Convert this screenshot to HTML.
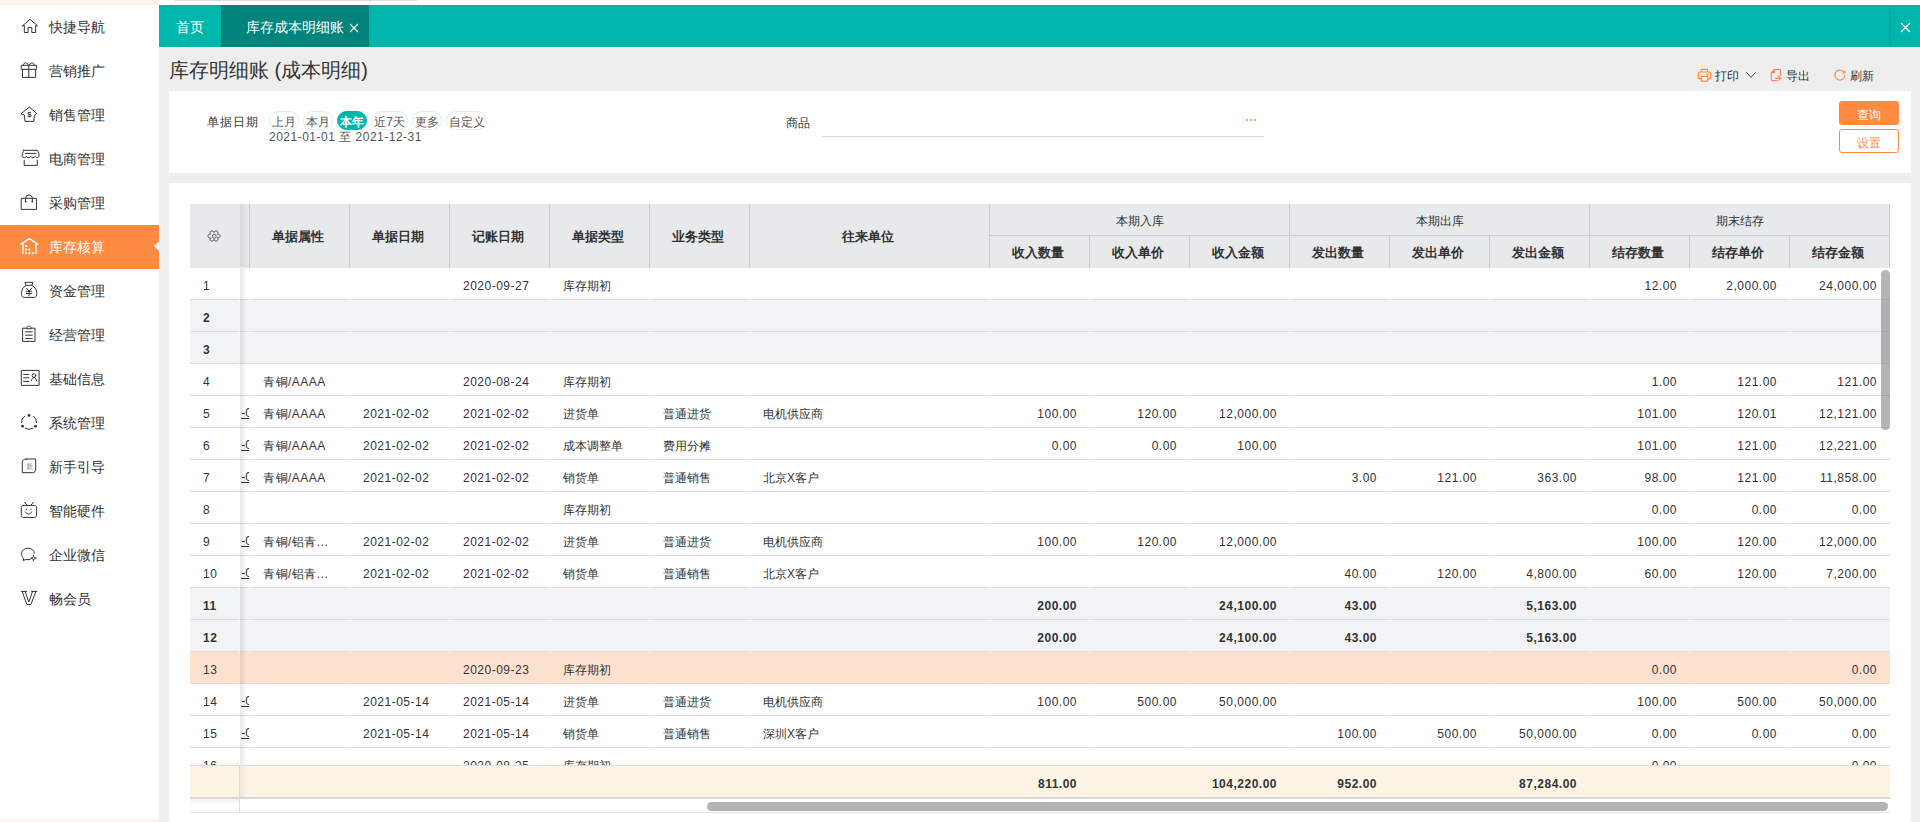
<!DOCTYPE html><html><head><meta charset="utf-8"><style>
*{margin:0;padding:0;box-sizing:border-box}
html,body{width:1920px;height:822px;overflow:hidden;background:#fff;font-family:"Liberation Sans",sans-serif;color:#333}
.abs{position:absolute}
svg{display:block}
.si{position:absolute;left:0;width:159px;height:44px;font-size:14px;color:#333}
.si span{position:absolute;left:49px;top:14px;line-height:16px}
.si svg{position:absolute;left:16px;top:7px}
.si.on{background:#ff8a42;color:#fff}
.tab{position:absolute;top:0;height:42px;font-size:14px;color:#fff}
.tab span{position:absolute;top:14px;line-height:16px}
.panel{position:absolute;background:#fff}
.pill{position:absolute;top:111px;height:19px;border:1px solid #d6f0ee;border-radius:10px;font-size:12px;color:#555;text-align:center;line-height:21px}
.pill.on{background:#00b5aa;border-color:#00b5aa;color:#fff;font-weight:bold}
.th{position:absolute;font-size:13px;font-weight:bold;color:#333;text-align:center;background:#e8e9eb;border-right:1px solid #cbcbcb;padding-right:4px}
.th.g{border-bottom:1px solid #cbcbcb}
.th.g{font-size:12px;font-weight:normal;padding-right:0}
.row{position:absolute;left:0;width:1700px;height:32px;border-bottom:1px solid #dcdcdc}
.c{position:absolute;top:4px;height:29px;line-height:28px;font-size:12px;color:#333;white-space:nowrap;overflow:hidden}
.n{letter-spacing:0.5px}
.r{text-align:right}
.b{font-weight:bold}
</style></head><body>
<div class="abs" style="left:0;top:0;width:159px;height:822px;background:#fff">
<div class="abs" style="left:0;top:0;width:159px;height:5px;background:#fff3ec"></div>
<div class="abs" style="left:0;top:819px;width:159px;height:3px;background:#fff3ec"></div>
<div class="si" style="top:5px"><svg width="28" height="28" viewBox="0 0 28 28"><path fill="none" stroke="#333" stroke-width="1" stroke-linejoin="round" stroke-linecap="round" d="M6.5 13.8 L14 7.3 L21.5 13.8 H19.6 V20.5 H15.8 V15.4 H12.1 V20.5 H8.3 V13.8 Z"/></svg><span>快捷导航</span></div>
<div class="si" style="top:49px"><svg width="28" height="28" viewBox="0 0 28 28"><path fill="none" stroke="#333" stroke-width="1" stroke-linejoin="round" stroke-linecap="round" d="M5.6 9.3 H20.4 V13.4 H5.6 Z M6.5 13.4 V21.4 H19.6 V13.4 M12.8 9.3 V21.4 M12.8 9.2 C11 6.3 7.5 5.8 7.4 9.2 M12.8 9.2 C14.6 6.3 18.2 5.8 18.2 9.2"/></svg><span>营销推广</span></div>
<div class="si" style="top:93px"><svg width="28" height="28" viewBox="0 0 28 28"><path fill="none" stroke="#333" stroke-width="1" stroke-linejoin="round" stroke-linecap="round" d="M5.4 13.5 L13.3 7 L20.8 13.5 L18.4 15.4 L17.8 21.4 H9 L8.4 15.4 Z"/><text x="13.3" y="17.3" font-size="7.5" text-anchor="middle" fill="#333" font-family="Liberation Sans" font-weight="bold">$</text></svg><span>销售管理</span></div>
<div class="si" style="top:137px"><svg width="28" height="28" viewBox="0 0 28 28"><path fill="none" stroke="#333" stroke-width="1" stroke-linejoin="round" stroke-linecap="round" d="M7.8 6.3 H21.4 C22.5 8 23.2 10.5 23 12.5 C22.6 14 20 14 19.2 12.4 C18.4 14 15.6 14 14.9 12.4 C14.2 14 11.4 14 10.5 12.4 C9.6 14 6.7 14 6.2 12.5 C6 10.5 6.7 8 7.8 6.3 Z M9.3 9.4 H19.8 M8.2 16.2 V21.4 H21.3 V16.2"/></svg><span>电商管理</span></div>
<div class="si" style="top:181px"><svg width="28" height="28" viewBox="0 0 28 28"><path fill="none" stroke="#333" stroke-width="1" stroke-linejoin="round" stroke-linecap="round" d="M5.6 10.3 H20.4 V21.4 H5.6 Z M9.6 13.5 V9.8 A3.4 3.4 0 0 1 16.3 9.8 V13.5"/><circle cx="9.6" cy="13.6" r="0.9" fill="#333"/><circle cx="16.3" cy="13.6" r="0.9" fill="#333"/></svg><span>采购管理</span></div>
<div class="si on" style="top:225px"><svg width="28" height="28" viewBox="0 0 28 28"><path fill="none" stroke="#fff" stroke-width="1.4" stroke-linejoin="round" stroke-linecap="round" d="M5 12.2 L13.4 6.6 L21.6 12.2 M7 11 V21.3 M20 11 V21.3"/><rect x="9" y="13" width="2" height="2" fill="#fff"/><rect x="9" y="16.6" width="2" height="2" fill="#fff"/><rect x="12.4" y="16.6" width="2" height="2" fill="#fff"/><rect x="9" y="20.2" width="2" height="2" fill="#fff"/><rect x="12.4" y="20.2" width="2" height="2" fill="#fff"/><rect x="15.8" y="20.2" width="2" height="2" fill="#fff"/></svg><span>库存核算</span></div>
<div class="si" style="top:269px"><svg width="28" height="28" viewBox="0 0 28 28"><path fill="none" stroke="#333" stroke-width="1" stroke-linejoin="round" stroke-linecap="round" d="M9.3 6.3 H16.9 L16 9.3 H10.2 Z M10 9.6 C7 11 5.5 14 5.5 17.6 C5.5 20.2 6.5 21.4 8.2 21.4 H18.2 C19.9 21.4 20.8 20.2 20.8 17.6 C20.8 14 19.3 11 16.3 9.6 M10.6 12.2 L13.1 15.2 L15.6 12.2 M10.3 15.3 H15.9 M10.3 17.5 H15.9 M13.1 15.2 V19.7"/></svg><span>资金管理</span></div>
<div class="si" style="top:313px"><svg width="28" height="28" viewBox="0 0 28 28"><path fill="none" stroke="#333" stroke-width="1" stroke-linejoin="round" stroke-linecap="round" d="M10.4 8.2 H6.6 V21.4 H19 V8.2 H15.4 M10.4 8.3 C10.8 6.9 11.7 6.2 12.9 6.2 C14.1 6.2 15 6.9 15.4 8.3 Z M9.6 11.8 H16.2 M9.6 15.2 H16.2 M9.6 18.6 H16.2"/></svg><span>经营管理</span></div>
<div class="si" style="top:357px"><svg width="28" height="28" viewBox="0 0 28 28"><path fill="none" stroke="#333" stroke-width="1" stroke-linejoin="round" stroke-linecap="round" d="M5.7 6.4 H23.1 V21.4 H5.7 Z M7.6 10.4 H12.8 M7.6 13.8 H12.8 M7.6 17.4 H12.8 M15.4 16.8 C15.8 14.8 16.6 13.6 18 13.6 C19.4 13.6 20.2 14.8 20.6 16.8"/><circle cx="18" cy="11.6" r="1.8" fill="none" stroke="#333" stroke-width="1" stroke-linejoin="round" stroke-linecap="round"/></svg><span>基础信息</span></div>
<div class="si" style="top:401px"><svg width="28" height="28" viewBox="0 0 28 28"><path fill="none" stroke="#333" stroke-width="1" stroke-linejoin="round" stroke-linecap="round" d="M8.6 8.2 A7.2 7.2 0 0 0 5.6 14.6 M17.6 8.2 A7.2 7.2 0 0 1 20.5 14.6 M9.4 20.4 A7.2 7.2 0 0 0 16.6 20.4"/><circle cx="13" cy="7.4" r="1.4" fill="#333"/><circle cx="6.6" cy="18.2" r="1.4" fill="#333"/><circle cx="19.5" cy="18.2" r="1.4" fill="#333"/></svg><span>系统管理</span></div>
<div class="si" style="top:445px"><svg width="28" height="28" viewBox="0 0 28 28"><path fill="none" stroke="#333" stroke-width="1" stroke-linejoin="round" stroke-linecap="round" d="M10.2 7 H19.7 V17.5 C19.7 19.5 18.5 20.7 16.5 20.7 H6.3 V10.2 C6.3 8.2 7.8 7 10.2 7 Z"/><text x="13" y="17.3" font-size="7" text-anchor="middle" fill="#888" font-family="Liberation Sans">新</text></svg><span>新手引导</span></div>
<div class="si" style="top:489px"><svg width="28" height="28" viewBox="0 0 28 28"><path fill="none" stroke="#333" stroke-width="1" stroke-linejoin="round" stroke-linecap="round" d="M7.3 9.4 H18.6 C19.8 9.4 20.6 10.2 20.6 11.4 V19.4 C20.6 20.6 19.8 21.4 18.6 21.4 H7.3 C6.1 21.4 5.3 20.6 5.3 19.4 V11.4 C5.3 10.2 6.1 9.4 7.3 9.4 Z M8.6 6.3 L11.2 9.3 M17.4 6.3 L14.8 9.3 M9.4 16 C10.5 18.8 14.5 18.8 15.6 16"/><circle cx="10.4" cy="13.4" r="0.6" fill="#333"/><circle cx="15" cy="13.4" r="0.6" fill="#333"/></svg><span>智能硬件</span></div>
<div class="si" style="top:533px"><svg width="28" height="28" viewBox="0 0 28 28"><path fill="none" stroke="#333" stroke-width="1" stroke-linejoin="round" stroke-linecap="round" d="M18.4 13.4 C18 10.2 15.8 8.3 12 8.3 C8 8.3 5.6 10.5 5.6 14 C5.6 16 6.5 17.4 7.6 18.4 L7.4 20.6 L9.4 19.6 H14.2 M17.5 15.4 C17.7 17.4 18.3 18 20.3 18.2 C18.3 18.4 17.7 19 17.5 21 C17.3 19 16.7 18.4 14.7 18.2 C16.7 18 17.3 17.4 17.5 15.4 Z"/></svg><span>企业微信</span></div>
<div class="si" style="top:577px"><svg width="28" height="28" viewBox="0 0 28 28"><path fill="none" stroke="#333" stroke-width="1" stroke-linejoin="round" stroke-linecap="round" d="M5.4 7.4 H10.6 M15.6 7.4 H20.8 M6.2 7.4 L10.8 20.5 H14.9 L19.9 7.4 M9.2 7.6 L12.8 18 L16.5 7.6"/></svg><span>畅会员</span></div>
<svg class="abs" style="left:153px;top:241px" width="6" height="10" viewBox="0 0 6 10"><path d="M6 0.5 L0.5 5 L6 9.5 Z" fill="#eef1f3"/></svg>
</div>
<div class="abs" style="left:159px;top:47px;width:1761px;height:775px;background:#eee"></div>
<div class="abs" style="left:174px;top:0;width:243px;height:1px;background:#dcdcdc"></div>
<div class="abs" style="left:159px;top:5px;width:1761px;height:42px;background:#00b5aa">
<div class="tab" style="left:0;width:62px"><span style="left:17px">首页</span></div>
<div class="tab" style="left:62px;width:148px;background:#00847c"><span style="left:25px">库存成本明细账</span><svg class="abs" style="left:128px;top:18px" width="10" height="10" viewBox="0 0 10 10"><path d="M1 1 L9 9 M9 1 L1 9" stroke="#fff" stroke-width="1.1"/></svg></div>
<div class="abs" style="left:1729px;top:0;width:3px;height:42px;background:linear-gradient(to right,rgba(0,0,0,0),rgba(0,0,0,0.06))"></div>
<svg class="abs" style="left:1741px;top:17px" width="11" height="11" viewBox="0 0 11 11"><path d="M1 1 L10 10 M10 1 L1 10" stroke="#fff" stroke-width="1.2"/></svg>
</div>
<div class="abs" style="left:169px;top:58px;font-size:20px;line-height:24px;color:#333">库存明细账 (成本明细)</div>
<svg class="abs" style="left:1694px;top:64px" width="20" height="22" viewBox="0 0 20 22" fill="none" stroke="#ff8a42" stroke-width="1.2" stroke-linejoin="round"><path d="M7.2 5.3 H13.6 V8 H7.2 Z M7.1 14.9 H5.6 C4.8 14.9 4.4 14.5 4.4 13.7 V9.2 C4.4 8.4 4.8 8 5.6 8 H15.4 C16.2 8 16.6 8.4 16.6 9.2 V13.7 C16.6 14.5 16.2 14.9 15.4 14.9 H13.7 M7.2 12.4 H13.6 V17.2 H7.2 Z"/><circle cx="13.5" cy="10.4" r="0.5" fill="#ff8a42"/></svg>
<div class="abs" style="left:1715px;top:69px;font-size:12px;line-height:14px;color:#333">打印</div>
<svg class="abs" style="left:1744px;top:70px" width="14" height="10" viewBox="0 0 14 10"><path d="M2.3 2.3 L7 7.3 L11.8 2.3" fill="none" stroke="#444" stroke-width="1"/></svg>
<svg class="abs" style="left:1766px;top:64px" width="20" height="22" viewBox="0 0 20 22" fill="none" stroke="#ff8264" stroke-width="1.2" stroke-linejoin="round" stroke-linecap="round"><path d="M14.4 11.4 V6.6 C14.4 5.9 14 5.5 13.3 5.5 H8.3 L5.3 8.6 V15.6 C5.3 16.3 5.7 16.7 6.4 16.7 H10.4 M8.3 5.5 V8.6 H5.3"/><path d="M9.2 14.3 H14.6 M12.5 12.2 L14.7 14.3 L12.5 16.4" stroke="#ff8a42"/></svg>
<div class="abs" style="left:1786px;top:69px;font-size:12px;line-height:14px;color:#333">导出</div>
<svg class="abs" style="left:1830px;top:64px" width="20" height="22" viewBox="0 0 20 22" fill="none" stroke="#ff8a42" stroke-width="1.2" stroke-linecap="round"><path d="M14.8 11.6 A5 5 0 1 1 13.4 7.5"/><path d="M11.9 9.6 L15.4 9.6 L15.4 6.3 Z" fill="#ff8a42" stroke="none"/></svg>
<div class="abs" style="left:1850px;top:69px;font-size:12px;line-height:14px;color:#333">刷新</div>
<div class="panel" style="left:169px;top:91px;width:1742px;height:82px"></div>
<div class="abs" style="left:207px;top:115px;font-size:12px;line-height:14px;color:#333;letter-spacing:0.9px">单据日期</div>
<div class="pill" style="left:269px;width:30px">上月</div>
<div class="pill" style="left:303px;width:30px">本月</div>
<div class="pill on" style="left:337px;width:30px">本年</div>
<div class="pill" style="left:371px;width:37px">近7天</div>
<div class="pill" style="left:412px;width:30px">更多</div>
<div class="pill" style="left:446px;width:41px">自定义</div>
<div class="abs n" style="left:269px;top:130px;font-size:12px;line-height:14px;color:#555">2021-01-01 至 2021-12-31</div>
<div class="abs" style="left:786px;top:116px;font-size:12px;line-height:14px;color:#333">商品</div>
<div class="abs" style="left:822px;top:136px;width:442px;height:1px;background:#dcdcdc"></div>
<div class="abs" style="left:1246px;top:119px;width:2px;height:2px;border-radius:1px;background:#ff7f50"></div>
<div class="abs" style="left:1250px;top:119px;width:2px;height:2px;border-radius:1px;background:#ff7f50"></div>
<div class="abs" style="left:1254px;top:119px;width:2px;height:2px;border-radius:1px;background:#ff7f50"></div>
<div class="abs" style="left:1839px;top:101px;width:60px;height:24px;background:#ff8a42;border-radius:3px;color:#fff;font-size:12px;line-height:28px;text-align:center">查询</div>
<div class="abs" style="left:1839px;top:129px;width:60px;height:24px;border:1px solid #ff8a42;border-radius:3px;color:#ff8a42;font-size:12px;line-height:26px;text-align:center">设置</div>
<div class="panel" style="left:169px;top:183px;width:1742px;height:639px"></div>
<div class="th" style="left:190px;top:204px;width:50px;height:64px;border-right:none"></div>
<svg class="abs" style="left:203px;top:225px" width="22" height="22" viewBox="0 0 22 22"><path d="M14.29 12.75 A2.0 1.90 0 1 1 11.00 14.50 A2.0 1.90 0 1 1 7.71 12.75 A2.0 1.90 0 1 1 7.71 9.25 A2.0 1.90 0 1 1 11.00 7.50 A2.0 1.90 0 1 1 14.29 9.25 A2.0 1.90 0 1 1 14.29 12.75 Z" fill="none" stroke="#555" stroke-width="1" stroke-linejoin="round"/><ellipse cx="11.3" cy="11.3" rx="1.9" ry="2" fill="none" stroke="#555" stroke-width="1"/></svg>
<div class="th" style="left:240px;top:204px;width:10px;height:64px"></div>
<div class="abs" style="left:240px;top:204px;width:8px;height:63px;background:linear-gradient(to right,rgba(0,0,0,0.07),rgba(0,0,0,0))"></div>
<div class="th" style="left:250px;top:204px;width:100px;height:64px;padding-top:25px;line-height:15px">单据属性</div>
<div class="th" style="left:350px;top:204px;width:100px;height:64px;padding-top:25px;line-height:15px">单据日期</div>
<div class="th" style="left:450px;top:204px;width:100px;height:64px;padding-top:25px;line-height:15px">记账日期</div>
<div class="th" style="left:550px;top:204px;width:100px;height:64px;padding-top:25px;line-height:15px">单据类型</div>
<div class="th" style="left:650px;top:204px;width:100px;height:64px;padding-top:25px;line-height:15px">业务类型</div>
<div class="th" style="left:750px;top:204px;width:240px;height:64px;padding-top:25px;line-height:15px">往来单位</div>
<div class="th g" style="left:990px;top:204px;width:300px;height:32px;padding-top:10px;line-height:14px">本期入库</div>
<div class="th" style="left:990px;top:236px;width:100px;height:32px;padding-top:9px;line-height:15px">收入数量</div>
<div class="th" style="left:1090px;top:236px;width:100px;height:32px;padding-top:9px;line-height:15px">收入单价</div>
<div class="th" style="left:1190px;top:236px;width:100px;height:32px;padding-top:9px;line-height:15px">收入金额</div>
<div class="th g" style="left:1290px;top:204px;width:300px;height:32px;padding-top:10px;line-height:14px">本期出库</div>
<div class="th" style="left:1290px;top:236px;width:100px;height:32px;padding-top:9px;line-height:15px">发出数量</div>
<div class="th" style="left:1390px;top:236px;width:100px;height:32px;padding-top:9px;line-height:15px">发出单价</div>
<div class="th" style="left:1490px;top:236px;width:100px;height:32px;padding-top:9px;line-height:15px">发出金额</div>
<div class="th g" style="left:1590px;top:204px;width:300px;height:32px;padding-top:10px;line-height:14px">期末结存</div>
<div class="th" style="left:1590px;top:236px;width:100px;height:32px;padding-top:9px;line-height:15px">结存数量</div>
<div class="th" style="left:1690px;top:236px;width:100px;height:32px;padding-top:9px;line-height:15px">结存单价</div>
<div class="th" style="left:1790px;top:236px;width:100px;height:32px;padding-top:9px;line-height:15px">结存金额</div>
<div class="abs" style="left:190px;top:268px;width:1700px;height:497px;overflow:hidden">
<div class="row" style="top:0px;background:#fff">
<div class="c n" style="left:13px;width:37px">1</div>
<div class="c n" style="left:273px;width:80px">2020-09-27</div>
<div class="c" style="left:373px;width:80px">库存期初</div>
<div class="c r n" style="left:1400px;width:87px">12.00</div>
<div class="c r n" style="left:1500px;width:87px">2,000.00</div>
<div class="c r n" style="left:1600px;width:87px">24,000.00</div>
</div>
<div class="row" style="top:32px;background:#f2f3f5">
<div class="c n b" style="left:13px;width:37px">2</div>
</div>
<div class="row" style="top:64px;background:#f2f3f5">
<div class="c n b" style="left:13px;width:37px">3</div>
</div>
<div class="row" style="top:96px;background:#fff">
<div class="c n" style="left:13px;width:37px">4</div>
<div class="c n" style="left:73px;width:80px">青铜/AAAA</div>
<div class="c n" style="left:273px;width:80px">2020-08-24</div>
<div class="c" style="left:373px;width:80px">库存期初</div>
<div class="c r n" style="left:1400px;width:87px">1.00</div>
<div class="c r n" style="left:1500px;width:87px">121.00</div>
<div class="c r n" style="left:1600px;width:87px">121.00</div>
</div>
<div class="row" style="top:128px;background:#fff">
<div class="c n" style="left:13px;width:37px">5</div>
<div class="c" style="left:50px;width:9px"><span style="position:absolute;right:-3px;top:0;border-bottom:1px solid #333;line-height:10px;margin-top:8px">-0</span></div>
<div class="c n" style="left:73px;width:80px">青铜/AAAA</div>
<div class="c n" style="left:173px;width:80px">2021-02-02</div>
<div class="c n" style="left:273px;width:80px">2021-02-02</div>
<div class="c" style="left:373px;width:80px">进货单</div>
<div class="c" style="left:473px;width:80px">普通进货</div>
<div class="c" style="left:573px;width:220px">电机供应商</div>
<div class="c r n" style="left:800px;width:87px">100.00</div>
<div class="c r n" style="left:900px;width:87px">120.00</div>
<div class="c r n" style="left:1000px;width:87px">12,000.00</div>
<div class="c r n" style="left:1400px;width:87px">101.00</div>
<div class="c r n" style="left:1500px;width:87px">120.01</div>
<div class="c r n" style="left:1600px;width:87px">12,121.00</div>
</div>
<div class="row" style="top:160px;background:#fff">
<div class="c n" style="left:13px;width:37px">6</div>
<div class="c" style="left:50px;width:9px"><span style="position:absolute;right:-3px;top:0;border-bottom:1px solid #333;line-height:10px;margin-top:8px">-0</span></div>
<div class="c n" style="left:73px;width:80px">青铜/AAAA</div>
<div class="c n" style="left:173px;width:80px">2021-02-02</div>
<div class="c n" style="left:273px;width:80px">2021-02-02</div>
<div class="c" style="left:373px;width:80px">成本调整单</div>
<div class="c" style="left:473px;width:80px">费用分摊</div>
<div class="c r n" style="left:800px;width:87px">0.00</div>
<div class="c r n" style="left:900px;width:87px">0.00</div>
<div class="c r n" style="left:1000px;width:87px">100.00</div>
<div class="c r n" style="left:1400px;width:87px">101.00</div>
<div class="c r n" style="left:1500px;width:87px">121.00</div>
<div class="c r n" style="left:1600px;width:87px">12,221.00</div>
</div>
<div class="row" style="top:192px;background:#fff">
<div class="c n" style="left:13px;width:37px">7</div>
<div class="c" style="left:50px;width:9px"><span style="position:absolute;right:-3px;top:0;border-bottom:1px solid #333;line-height:10px;margin-top:8px">-0</span></div>
<div class="c n" style="left:73px;width:80px">青铜/AAAA</div>
<div class="c n" style="left:173px;width:80px">2021-02-02</div>
<div class="c n" style="left:273px;width:80px">2021-02-02</div>
<div class="c" style="left:373px;width:80px">销货单</div>
<div class="c" style="left:473px;width:80px">普通销售</div>
<div class="c" style="left:573px;width:220px">北京X客户</div>
<div class="c r n" style="left:1100px;width:87px">3.00</div>
<div class="c r n" style="left:1200px;width:87px">121.00</div>
<div class="c r n" style="left:1300px;width:87px">363.00</div>
<div class="c r n" style="left:1400px;width:87px">98.00</div>
<div class="c r n" style="left:1500px;width:87px">121.00</div>
<div class="c r n" style="left:1600px;width:87px">11,858.00</div>
</div>
<div class="row" style="top:224px;background:#fff">
<div class="c n" style="left:13px;width:37px">8</div>
<div class="c" style="left:373px;width:80px">库存期初</div>
<div class="c r n" style="left:1400px;width:87px">0.00</div>
<div class="c r n" style="left:1500px;width:87px">0.00</div>
<div class="c r n" style="left:1600px;width:87px">0.00</div>
</div>
<div class="row" style="top:256px;background:#fff">
<div class="c n" style="left:13px;width:37px">9</div>
<div class="c" style="left:50px;width:9px"><span style="position:absolute;right:-3px;top:0;border-bottom:1px solid #333;line-height:10px;margin-top:8px">-0</span></div>
<div class="c n" style="left:73px;width:80px">青铜/铝青...</div>
<div class="c n" style="left:173px;width:80px">2021-02-02</div>
<div class="c n" style="left:273px;width:80px">2021-02-02</div>
<div class="c" style="left:373px;width:80px">进货单</div>
<div class="c" style="left:473px;width:80px">普通进货</div>
<div class="c" style="left:573px;width:220px">电机供应商</div>
<div class="c r n" style="left:800px;width:87px">100.00</div>
<div class="c r n" style="left:900px;width:87px">120.00</div>
<div class="c r n" style="left:1000px;width:87px">12,000.00</div>
<div class="c r n" style="left:1400px;width:87px">100.00</div>
<div class="c r n" style="left:1500px;width:87px">120.00</div>
<div class="c r n" style="left:1600px;width:87px">12,000.00</div>
</div>
<div class="row" style="top:288px;background:#fff">
<div class="c n" style="left:13px;width:37px">10</div>
<div class="c" style="left:50px;width:9px"><span style="position:absolute;right:-3px;top:0;border-bottom:1px solid #333;line-height:10px;margin-top:8px">-0</span></div>
<div class="c n" style="left:73px;width:80px">青铜/铝青...</div>
<div class="c n" style="left:173px;width:80px">2021-02-02</div>
<div class="c n" style="left:273px;width:80px">2021-02-02</div>
<div class="c" style="left:373px;width:80px">销货单</div>
<div class="c" style="left:473px;width:80px">普通销售</div>
<div class="c" style="left:573px;width:220px">北京X客户</div>
<div class="c r n" style="left:1100px;width:87px">40.00</div>
<div class="c r n" style="left:1200px;width:87px">120.00</div>
<div class="c r n" style="left:1300px;width:87px">4,800.00</div>
<div class="c r n" style="left:1400px;width:87px">60.00</div>
<div class="c r n" style="left:1500px;width:87px">120.00</div>
<div class="c r n" style="left:1600px;width:87px">7,200.00</div>
</div>
<div class="row" style="top:320px;background:#f2f3f5">
<div class="c n b" style="left:13px;width:37px">11</div>
<div class="c r n b" style="left:800px;width:87px">200.00</div>
<div class="c r n b" style="left:1000px;width:87px">24,100.00</div>
<div class="c r n b" style="left:1100px;width:87px">43.00</div>
<div class="c r n b" style="left:1300px;width:87px">5,163.00</div>
</div>
<div class="row" style="top:352px;background:#f2f3f5">
<div class="c n b" style="left:13px;width:37px">12</div>
<div class="c r n b" style="left:800px;width:87px">200.00</div>
<div class="c r n b" style="left:1000px;width:87px">24,100.00</div>
<div class="c r n b" style="left:1100px;width:87px">43.00</div>
<div class="c r n b" style="left:1300px;width:87px">5,163.00</div>
</div>
<div class="row" style="top:384px;background:#ffe1d0">
<div class="c n" style="left:13px;width:37px">13</div>
<div class="c n" style="left:273px;width:80px">2020-09-23</div>
<div class="c" style="left:373px;width:80px">库存期初</div>
<div class="c r n" style="left:1400px;width:87px">0.00</div>
<div class="c r n" style="left:1600px;width:87px">0.00</div>
</div>
<div class="row" style="top:416px;background:#fff">
<div class="c n" style="left:13px;width:37px">14</div>
<div class="c" style="left:50px;width:9px"><span style="position:absolute;right:-3px;top:0;border-bottom:1px solid #333;line-height:10px;margin-top:8px">-0</span></div>
<div class="c n" style="left:173px;width:80px">2021-05-14</div>
<div class="c n" style="left:273px;width:80px">2021-05-14</div>
<div class="c" style="left:373px;width:80px">进货单</div>
<div class="c" style="left:473px;width:80px">普通进货</div>
<div class="c" style="left:573px;width:220px">电机供应商</div>
<div class="c r n" style="left:800px;width:87px">100.00</div>
<div class="c r n" style="left:900px;width:87px">500.00</div>
<div class="c r n" style="left:1000px;width:87px">50,000.00</div>
<div class="c r n" style="left:1400px;width:87px">100.00</div>
<div class="c r n" style="left:1500px;width:87px">500.00</div>
<div class="c r n" style="left:1600px;width:87px">50,000.00</div>
</div>
<div class="row" style="top:448px;background:#fff">
<div class="c n" style="left:13px;width:37px">15</div>
<div class="c" style="left:50px;width:9px"><span style="position:absolute;right:-3px;top:0;border-bottom:1px solid #333;line-height:10px;margin-top:8px">-0</span></div>
<div class="c n" style="left:173px;width:80px">2021-05-14</div>
<div class="c n" style="left:273px;width:80px">2021-05-14</div>
<div class="c" style="left:373px;width:80px">销货单</div>
<div class="c" style="left:473px;width:80px">普通销售</div>
<div class="c" style="left:573px;width:220px">深圳X客户</div>
<div class="c r n" style="left:1100px;width:87px">100.00</div>
<div class="c r n" style="left:1200px;width:87px">500.00</div>
<div class="c r n" style="left:1300px;width:87px">50,000.00</div>
<div class="c r n" style="left:1400px;width:87px">0.00</div>
<div class="c r n" style="left:1500px;width:87px">0.00</div>
<div class="c r n" style="left:1600px;width:87px">0.00</div>
</div>
<div class="row" style="top:480px;background:#fff">
<div class="c n" style="left:13px;width:37px">16</div>
<div class="c n" style="left:273px;width:80px">2020-08-25</div>
<div class="c" style="left:373px;width:80px">库存期初</div>
<div class="c r n" style="left:1400px;width:87px">0.00</div>
<div class="c r n" style="left:1600px;width:87px">0.00</div>
</div>
</div>
<div class="abs" style="left:239px;top:268px;width:1px;height:497px;background:repeating-linear-gradient(to bottom,transparent 0,transparent 31px,rgba(255,255,255,0.6) 31px,rgba(255,255,255,0.6) 32px)"></div>
<div class="abs" style="left:249px;top:268px;width:2px;height:497px;background:repeating-linear-gradient(to bottom,transparent 0,transparent 31px,rgba(255,255,255,0.6) 31px,rgba(255,255,255,0.6) 32px)"></div>
<div class="abs" style="left:349px;top:268px;width:2px;height:497px;background:repeating-linear-gradient(to bottom,transparent 0,transparent 31px,rgba(255,255,255,0.6) 31px,rgba(255,255,255,0.6) 32px)"></div>
<div class="abs" style="left:449px;top:268px;width:2px;height:497px;background:repeating-linear-gradient(to bottom,transparent 0,transparent 31px,rgba(255,255,255,0.6) 31px,rgba(255,255,255,0.6) 32px)"></div>
<div class="abs" style="left:549px;top:268px;width:2px;height:497px;background:repeating-linear-gradient(to bottom,transparent 0,transparent 31px,rgba(255,255,255,0.6) 31px,rgba(255,255,255,0.6) 32px)"></div>
<div class="abs" style="left:649px;top:268px;width:2px;height:497px;background:repeating-linear-gradient(to bottom,transparent 0,transparent 31px,rgba(255,255,255,0.6) 31px,rgba(255,255,255,0.6) 32px)"></div>
<div class="abs" style="left:749px;top:268px;width:2px;height:497px;background:repeating-linear-gradient(to bottom,transparent 0,transparent 31px,rgba(255,255,255,0.6) 31px,rgba(255,255,255,0.6) 32px)"></div>
<div class="abs" style="left:989px;top:268px;width:2px;height:497px;background:repeating-linear-gradient(to bottom,transparent 0,transparent 31px,rgba(255,255,255,0.6) 31px,rgba(255,255,255,0.6) 32px)"></div>
<div class="abs" style="left:1089px;top:268px;width:2px;height:497px;background:repeating-linear-gradient(to bottom,transparent 0,transparent 31px,rgba(255,255,255,0.6) 31px,rgba(255,255,255,0.6) 32px)"></div>
<div class="abs" style="left:1189px;top:268px;width:2px;height:497px;background:repeating-linear-gradient(to bottom,transparent 0,transparent 31px,rgba(255,255,255,0.6) 31px,rgba(255,255,255,0.6) 32px)"></div>
<div class="abs" style="left:1289px;top:268px;width:2px;height:497px;background:repeating-linear-gradient(to bottom,transparent 0,transparent 31px,rgba(255,255,255,0.6) 31px,rgba(255,255,255,0.6) 32px)"></div>
<div class="abs" style="left:1389px;top:268px;width:2px;height:497px;background:repeating-linear-gradient(to bottom,transparent 0,transparent 31px,rgba(255,255,255,0.6) 31px,rgba(255,255,255,0.6) 32px)"></div>
<div class="abs" style="left:1489px;top:268px;width:2px;height:497px;background:repeating-linear-gradient(to bottom,transparent 0,transparent 31px,rgba(255,255,255,0.6) 31px,rgba(255,255,255,0.6) 32px)"></div>
<div class="abs" style="left:1589px;top:268px;width:2px;height:497px;background:repeating-linear-gradient(to bottom,transparent 0,transparent 31px,rgba(255,255,255,0.6) 31px,rgba(255,255,255,0.6) 32px)"></div>
<div class="abs" style="left:1689px;top:268px;width:2px;height:497px;background:repeating-linear-gradient(to bottom,transparent 0,transparent 31px,rgba(255,255,255,0.6) 31px,rgba(255,255,255,0.6) 32px)"></div>
<div class="abs" style="left:1789px;top:268px;width:2px;height:497px;background:repeating-linear-gradient(to bottom,transparent 0,transparent 31px,rgba(255,255,255,0.6) 31px,rgba(255,255,255,0.6) 32px)"></div>
<div class="abs" style="left:240px;top:268px;width:7px;height:497px;background:linear-gradient(to right,rgba(0,0,0,0.09),rgba(0,0,0,0))"></div>
<div class="abs" style="left:190px;top:765px;width:1700px;height:34px;background:#fdf4e6;border-top:1px solid #dedede;border-bottom:2px solid #d9d9d9">
<div class="c r b n" style="left:800px;width:87px;top:4px">811.00</div>
<div class="c r b n" style="left:1000px;width:87px;top:4px">104,220.00</div>
<div class="c r b n" style="left:1100px;width:87px;top:4px">952.00</div>
<div class="c r b n" style="left:1300px;width:87px;top:4px">87,284.00</div>
</div>
<div class="abs" style="left:240px;top:766px;width:8px;height:31px;background:linear-gradient(to right,rgba(0,0,0,0.05),rgba(0,0,0,0))"></div>
<div class="abs" style="left:239px;top:765px;width:1px;height:47px;background:#dcdcdc"></div>
<div class="abs" style="left:190px;top:799px;width:49px;height:6px;background:linear-gradient(to bottom,rgba(0,0,0,0.05),rgba(0,0,0,0))"></div>
<div class="abs" style="left:190px;top:758px;width:49px;height:7px;background:linear-gradient(to top,rgba(0,0,0,0.04),rgba(0,0,0,0))"></div>
<div class="abs" style="left:190px;top:812px;width:1700px;height:1px;background:#e4e4e4"></div>
<div class="abs" style="left:707px;top:802px;width:1181px;height:9px;border-radius:5px;background:#b3b3b3"></div>
<div class="abs" style="left:1881px;top:270px;width:9px;height:160px;border-radius:5px;background:rgba(120,120,120,0.55)"></div>
</body></html>
